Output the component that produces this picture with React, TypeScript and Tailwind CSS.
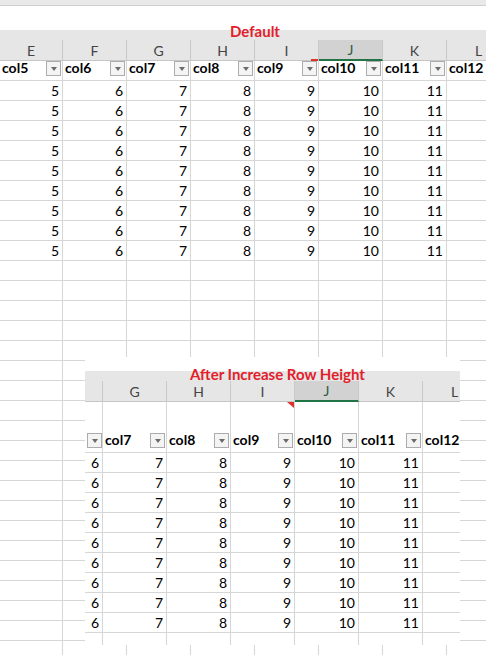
import clsx from "clsx"

type Col = {
  letter: string
  w: string
  head: string
  value?: number
  filter?: boolean
  comment?: boolean
}

const TOP_COLS: Col[] = [
  { letter: "E", w: "w-[63px]", head: "col5", value: 5, filter: true },
  { letter: "F", w: "w-[64px]", head: "col6", value: 6, filter: true },
  { letter: "G", w: "w-[64px]", head: "col7", value: 7, filter: true },
  { letter: "H", w: "w-[64px]", head: "col8", value: 8, filter: true },
  { letter: "I", w: "w-[64px]", head: "col9", value: 9, filter: true, comment: true },
  { letter: "J", w: "w-[64px]", head: "col10", value: 10, filter: true },
  { letter: "K", w: "w-[64px]", head: "col11", value: 11, filter: true },
  { letter: "L", w: "w-[64px]", head: "col12", filter: true },
]

// pasted crop: only the right edge of column F is visible
const CROP_COLS: Col[] = [
  { letter: "", w: "w-[18px]", head: "", value: 6, filter: true },
  { letter: "G", w: "w-[64px]", head: "col7", value: 7, filter: true },
  { letter: "H", w: "w-[64px]", head: "col8", value: 8, filter: true },
  { letter: "I", w: "w-[64px]", head: "col9", value: 9, filter: true, comment: true },
  { letter: "J", w: "w-[64px]", head: "col10", value: 10, filter: true },
  { letter: "K", w: "w-[64px]", head: "col11", value: 11, filter: true },
  { letter: "L", w: "w-[64px]", head: "col12", filter: true },
]

const SELECTED = "J"

export default function App() {
  return (
    <div className="relative h-[655px] w-[486px] overflow-hidden bg-white font-['Lato','Liberation_Sans',sans-serif] text-black">
      <div className="h-[6px] border-b border-[#d0d0d0] bg-[#e9e9e9]" />
      <div className="h-[24px] bg-white" />

      <Sheet cols={TOP_COLS} headRow="h-[20px]" dataRows={9} emptyRows={22} comment="bar" />

      <div className="absolute left-[230px] top-[24px] text-[15px] font-bold leading-none text-[#e2202a]">
        Default
      </div>

      <div className="absolute left-[85px] top-[357px] h-[288px] w-[375px] overflow-hidden bg-white">
        <div className="h-[14px]" />
        <Sheet cols={CROP_COLS} headRow="h-[51px]" dataRows={9} emptyRows={2} comment="tri" />
        <div className="absolute left-[105px] top-[10px] text-[15px] font-bold leading-none text-[#e2202a]">
          After Increase Row Height
        </div>
      </div>
    </div>
  )
}

function Sheet({
  cols,
  headRow,
  dataRows,
  emptyRows,
  comment,
}: {
  cols: Col[]
  headRow: string
  dataRows: number
  emptyRows: number
  comment: "bar" | "tri"
}) {
  return (
    <div className="flex flex-col">
      <div className="h-[10px] bg-[#e6e6e6]" />
      <div className="flex h-[21px] bg-[#e6e6e6]">
        {cols.map((c) => (
          <div
            key={"l" + c.letter + c.head}
            className={clsx(
              "flex shrink-0 items-center justify-center border-r border-r-[#c9c9c9] pt-[1px] text-[14px] leading-none",
              c.w,
              c.letter === SELECTED
                ? "border-b-2 border-b-[#217346] bg-[#d2d2d2] text-[#2a5e3c]"
                : "border-b border-b-[#c6c6c6] text-[#444]"
            )}
          >
            {c.letter}
          </div>
        ))}
      </div>

      <div className={clsx("flex", headRow)}>
        {cols.map((c) => (
          <div
            key={"h" + c.letter + c.head}
            className={clsx(
              "relative flex shrink-0 items-end justify-between border-b border-r border-[#d6d6d6] pb-[4px] pl-[2px] pr-[1px]",
              c.w
            )}
          >
            <span className="text-[14px] font-bold leading-[16px]">{c.head}</span>
            {c.filter && <FilterButton />}
            {c.comment &&
              (comment === "bar" ? (
                <span className="absolute right-0 top-[-2px] h-[2px] w-[7px] bg-[#e0322c]" />
              ) : (
                <span className="absolute right-0 top-0 h-0 w-0 border-l-[7px] border-t-[6px] border-l-transparent border-t-[#e0322c]" />
              ))}
          </div>
        ))}
      </div>

      {Array.from({ length: dataRows }).map((_, r) => (
        <div key={"d" + r} className="flex h-[20px]">
          {cols.map((c) => (
            <div
              key={c.letter + c.head}
              className={clsx(
                "shrink-0 border-b border-r border-[#d6d6d6] pr-[3px] text-right text-[14px] leading-[19px]",
                c.w
              )}
            >
              {c.value}
            </div>
          ))}
        </div>
      ))}

      {Array.from({ length: emptyRows }).map((_, r) => (
        <div key={"e" + r} className="flex h-[20px]">
          {cols.map((c) => (
            <div key={c.letter + c.head} className={clsx("shrink-0 border-b border-r border-[#d6d6d6]", c.w)} />
          ))}
        </div>
      ))}
    </div>
  )
}

function FilterButton() {
  return (
    <span className="flex h-[15px] w-[15px] shrink-0 items-center justify-center border border-[#acacac] bg-[#f4f4f4]">
      <span className="h-0 w-0 border-x-[3.5px] border-t-[4px] border-x-transparent border-t-[#6b6b6b]" />
    </span>
  )
}
